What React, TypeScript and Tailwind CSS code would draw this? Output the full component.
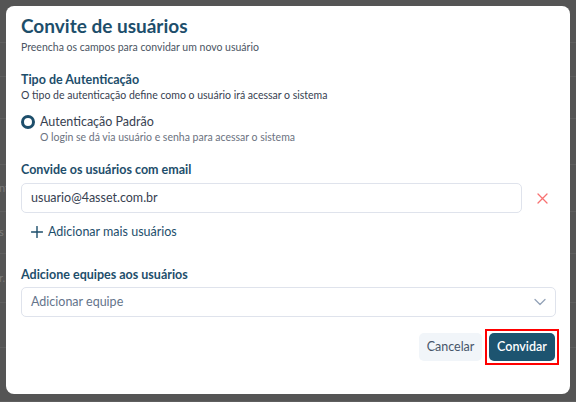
import React from "react";

function XIcon() {
  return (
    <svg width="11" height="11" viewBox="0 0 11 11" fill="none">
      <path d="M1 1L10 10M10 1L1 10" stroke="#f87171" strokeWidth="1.3" strokeLinecap="round" />
    </svg>
  );
}

function PlusIcon() {
  return (
    <svg width="12" height="12" viewBox="0 0 12 12" fill="none">
      <path d="M6 0.5V11.5M0.5 6H11.5" stroke="#1d4e6b" strokeWidth="1.4" strokeLinecap="round" />
    </svg>
  );
}

function Chevron() {
  return (
    <svg width="12" height="8" viewBox="0 0 12 8" fill="none">
      <path d="M1 1.5L6 6.5L11 1.5" stroke="#94a3b8" strokeWidth="1.3" strokeLinecap="round" strokeLinejoin="round" />
    </svg>
  );
}

function BgRow({ h, text }: { h: string; text?: string }) {
  return (
    <div className={`flex items-center border-b border-[#5f5f5f] text-[11px] text-[#7a7a7a] ${h}`}>
      <span className="-ml-[1px]">{text ?? ""}</span>
    </div>
  );
}

export default function App() {
  return (
    <div className="relative w-[576px] h-[402px] overflow-hidden bg-[#555555] font-[Lato,'Open_Sans',sans-serif]">
      <div className="flex flex-col">
        <BgRow h="h-[43px]" />
        <BgRow h="h-[34px]" />
        <BgRow h="h-[42px]" />
        <BgRow h="h-[46px]" />
        <BgRow h="h-[47px]" text="nt" />
        <BgRow h="h-[42px]" text="s" />
        <BgRow h="h-[49px]" text="r." />
        <BgRow h="h-[45px]" />
        <BgRow h="h-[54px]" />
      </div>
      <div className="absolute left-[6px] top-[6px] w-[564px] h-[388px] rounded-[8px] bg-white px-[15px] pt-[7px] flex flex-col">
        <h1 className="text-[19px] font-bold leading-[26px] text-[#1d4e6b]">Convite de usuários</h1>
        <p className="text-[10.5px] leading-[14px] text-[#4b5563] mt-[1px]">
          Preencha os campos para convidar um novo usuário
        </p>

        <h2 className="mt-[18px] text-[12.5px] font-bold leading-[16px] text-[#1d4e6b]">Tipo de Autenticação</h2>
        <p className="text-[10.5px] leading-[15px] text-[#374151]">
          O tipo de autenticação define como o usuário irá acessar o sistema
        </p>

        <div className="mt-[11px] flex items-start">
          <div className="mt-[1px] w-[14px] h-[14px] rounded-full border-[3px] border-[#1d4e6b] bg-white" />
          <div className="ml-[5px] flex flex-col">
            <span className="text-[12.5px] leading-[16px] text-[#374151]">Autenticação Padrão</span>
            <span className="text-[10.5px] leading-[14px] text-[#6b7280]">
              O login se dá via usuário e senha para acessar o sistema
            </span>
          </div>
        </div>

        <h2 className="mt-[18px] text-[12.5px] font-bold leading-[16px] text-[#1d4e6b]">
          Convide os usuários com email
        </h2>
        <div className="mt-[5px] flex items-center">
          <div className="w-[501px] h-[30px] rounded-[5px] border border-[#dfe3ec] flex items-center pl-[9px] text-[12.5px] text-[#374151]">
            usuario@4asset.com.br
          </div>
          <div className="ml-[15px] flex items-center">
            <XIcon />
          </div>
        </div>

        <div className="mt-[11px] ml-[10px] flex items-center gap-[5px] text-[12.5px] leading-[16px] text-[#1d4e6b]">
          <PlusIcon />
          <span>Adicionar mais usuários</span>
        </div>

        <h2 className="mt-[27px] text-[12.5px] font-bold leading-[16px] text-[#1d4e6b]">
          Adicione equipes aos usuários
        </h2>
        <div className="mt-[4px] h-[30px] w-[535px] rounded-[5px] border border-[#dfe3ec] flex items-center justify-between pl-[9px] pr-[9px] text-[12.5px] text-[#64748b]">
          <span>Adicionar equipe</span>
          <Chevron />
        </div>

        <div className="mt-[12px] flex justify-end items-center gap-[3px]">
          <button className="h-[28px] w-[63px] rounded-[5px] bg-[#f1f5f9] text-[12.5px] text-[#475569]">
            Cancelar
          </button>
          <div className="border-[2px] border-[#ff0000] p-[2px] -mr-[4px]">
            <button className="h-[28px] w-[66px] rounded-[5px] bg-[#1d5470] text-[12.5px] font-semibold text-white">
              Convidar
            </button>
          </div>
        </div>
      </div>
    </div>
  );
}
